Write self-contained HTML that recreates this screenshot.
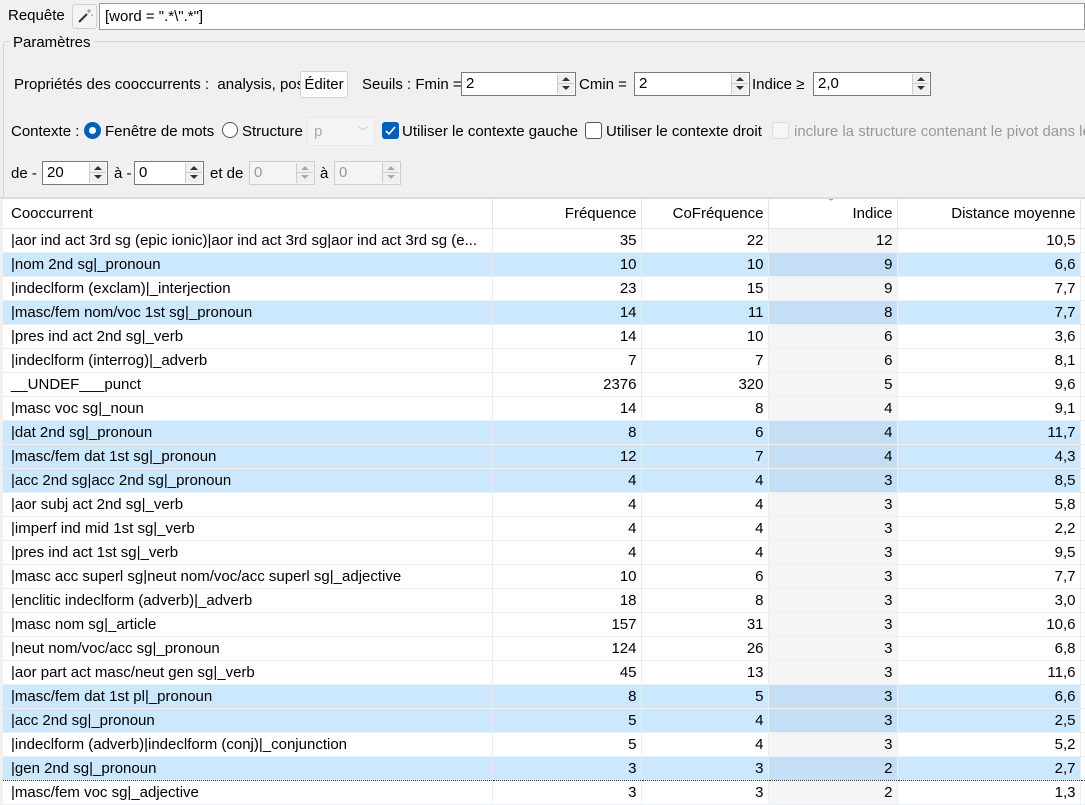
<!DOCTYPE html>
<html><head><meta charset="utf-8">
<style>
*{box-sizing:border-box;margin:0;padding:0}
body{width:1085px;height:805px;overflow:hidden;background:#f0f0f0;font-family:"Liberation Sans",sans-serif;font-size:15px;color:#000;position:relative}
.a{position:absolute;white-space:nowrap}
.box{position:absolute;background:#fff;border:1px solid #7a7a7a;height:24px;line-height:22px;padding-left:4px}
.spin{position:absolute;top:1px;right:1px;width:17px;height:20px;border-left:1px solid #ccc;background:#f0f0f0}
.spin:before{content:"";position:absolute;left:4px;top:3px;border:4px solid transparent;border-bottom:4px solid #333;border-top:0}
.spin:after{content:"";position:absolute;left:4px;top:12px;border:4px solid transparent;border-top:4px solid #333;border-bottom:0}
.spin i{position:absolute;left:0;right:0;top:9px;border-top:1px solid #ccc}
.dis{border-color:#ccc;color:#999;background:#f4f4f4}
.dis .spin:before{border-bottom-color:#aaa}.dis .spin:after{border-top-color:#aaa}
table{position:absolute;left:3px;top:199px;width:1082px;border-collapse:collapse;background:#fff;table-layout:fixed}
td,th{height:24px;padding:0 4px;border-right:1px solid #e9eef5;border-bottom:1px solid #eceff3;font-weight:normal;white-space:nowrap;overflow:hidden}
th{height:29px;text-align:right;border-right:1px solid #e5e5e5;border-bottom:1px solid #e5e5e5}
td{text-align:right}
td:first-child,th:first-child{text-align:left;padding-left:8px}
td:nth-child(4){background:#f5f5f5}
tr.s td{background:#cce8ff}
tr.s td:nth-child(4){background:#c4dff5}
tr.s td:nth-child(6),td:nth-child(6){background:#fff}
tr.f td{border-top:1px dotted #333;border-bottom:1px dotted #333}
</style></head><body>
<div class="a" style="left:8px;top:7px">Requête</div>
<div class="a" style="left:72px;top:4px;width:25px;height:25px;border:1px solid #d0d0d0;border-radius:3px;background:#f4f4f4">
<svg width="23" height="23" viewBox="0 0 23 23"><line x1="6" y1="17" x2="14" y2="9" stroke="#333" stroke-width="2"/><g stroke="#888" stroke-width="1"><line x1="16" y1="4" x2="16" y2="8"/><line x1="14" y1="6" x2="18" y2="6"/><line x1="19" y1="9" x2="19" y2="11"/></g></svg></div>
<div class="box" style="left:99px;top:3px;width:986px;height:27px;line-height:25px;padding-left:5px;border-color:#999">[word = ".*\".*"]</div>
<div class="a" style="left:3px;top:41px;width:1090px;height:158px;border:1px solid #d5d5d5;border-radius:3px"></div>
<div class="a" style="left:10px;top:34px;background:#f0f0f0;padding:0 3px">Paramètres</div>
<div class="a" style="left:14px;top:76px">Propriétés des cooccurrents :&nbsp; analysis, pos</div>
<div class="a" style="left:300px;top:71px;width:48px;height:27px;border:1px solid #d0d0d0;border-radius:3px;background:#fdfdfd;text-align:center;line-height:25px">Éditer</div>
<div class="a" style="left:362px;top:76px">Seuils : Fmin =</div>
<div class="box" style="left:461px;top:72px;width:115px">2<div class="spin"><i></i></div></div>
<div class="a" style="left:579px;top:76px">Cmin =</div>
<div class="box" style="left:634px;top:72px;width:116px">2<div class="spin"><i></i></div></div>
<div class="a" style="left:752px;top:76px">Indice ≥</div>
<div class="box" style="left:813px;top:72px;width:118px">2,0<div class="spin"><i></i></div></div>
<div class="a" style="left:11px;top:123px">Contexte :</div>
<div class="a" style="left:84px;top:122px;width:17px;height:17px;border-radius:50%;background:#005fb8"><div style="position:absolute;left:5px;top:5px;width:7px;height:7px;border-radius:50%;background:#fff"></div></div>
<div class="a" style="left:105px;top:123px">Fenêtre de mots</div>
<div class="a" style="left:222px;top:122px;width:16px;height:16px;border-radius:50%;border:1px solid #555;background:#fff"></div>
<div class="a" style="left:242px;top:123px">Structure</div>
<div class="a" style="left:307px;top:117px;width:68px;height:29px;background:#f4f4f4;border:1px solid #e8e8e8;color:#aaa;padding:5px 0 0 6px">p<span style="position:absolute;right:6px;top:5px;font-size:10px;color:#bbb">﹀</span></div>
<div class="a" style="left:382px;top:122px;width:17px;height:17px;border-radius:3px;background:#005fb8"><svg width="17" height="17"><path d="M4 9 L7 12 L13 5" stroke="#fff" stroke-width="1.6" fill="none"/></svg></div>
<div class="a" style="left:402px;top:123px">Utiliser le contexte gauche</div>
<div class="a" style="left:585px;top:122px;width:17px;height:17px;border-radius:3px;border:1px solid #555;background:#fff"></div>
<div class="a" style="left:606px;top:123px">Utiliser le contexte droit</div>
<div class="a" style="left:772px;top:122px;width:17px;height:17px;border-radius:3px;border:1px solid #ddd;background:#f6f6f6"></div>
<div class="a" style="left:794px;top:123px;color:#999">inclure la structure contenant le pivot dans le</div>
<div class="a" style="left:11px;top:165px">de -</div>
<div class="box" style="left:42px;top:161px;width:66px">20<div class="spin"><i></i></div></div>
<div class="a" style="left:114px;top:165px">à -</div>
<div class="box" style="left:134px;top:161px;width:70px">0<div class="spin"><i></i></div></div>
<div class="a" style="left:210px;top:165px">et de</div>
<div class="box dis" style="left:249px;top:161px;width:66px">0<div class="spin"><i></i></div></div>
<div class="a" style="left:320px;top:165px">à</div>
<div class="box dis" style="left:334px;top:161px;width:67px">0<div class="spin"><i></i></div></div>
<div class="a" style="left:0;top:197px;width:1085px;border-top:2px solid #dcdcdc"></div>
<table>
<colgroup><col style="width:489px"><col style="width:149px"><col style="width:127px"><col style="width:129px"><col style="width:183px"><col style="width:5px"></colgroup>
<tr><th>Cooccurrent</th><th>Fréquence</th><th>CoFréquence</th><th style="position:relative">Indice<span style="position:absolute;left:58px;top:-4px;font-size:9px;color:#666">﹀</span></th><th>Distance moyenne</th><th></th></tr>
<tr><td>|aor ind act 3rd sg (epic ionic)|aor ind act 3rd sg|aor ind act 3rd sg (e...</td><td>35</td><td>22</td><td>12</td><td>10,5</td><td></td></tr>
<tr class="s"><td>|nom 2nd sg|_pronoun</td><td>10</td><td>10</td><td>9</td><td>6,6</td><td></td></tr>
<tr><td>|indeclform (exclam)|_interjection</td><td>23</td><td>15</td><td>9</td><td>7,7</td><td></td></tr>
<tr class="s"><td>|masc/fem nom/voc 1st sg|_pronoun</td><td>14</td><td>11</td><td>8</td><td>7,7</td><td></td></tr>
<tr><td>|pres ind act 2nd sg|_verb</td><td>14</td><td>10</td><td>6</td><td>3,6</td><td></td></tr>
<tr><td>|indeclform (interrog)|_adverb</td><td>7</td><td>7</td><td>6</td><td>8,1</td><td></td></tr>
<tr><td>__UNDEF___punct</td><td>2376</td><td>320</td><td>5</td><td>9,6</td><td></td></tr>
<tr><td>|masc voc sg|_noun</td><td>14</td><td>8</td><td>4</td><td>9,1</td><td></td></tr>
<tr class="s"><td>|dat 2nd sg|_pronoun</td><td>8</td><td>6</td><td>4</td><td>11,7</td><td></td></tr>
<tr class="s"><td>|masc/fem dat 1st sg|_pronoun</td><td>12</td><td>7</td><td>4</td><td>4,3</td><td></td></tr>
<tr class="s"><td>|acc 2nd sg|acc 2nd sg|_pronoun</td><td>4</td><td>4</td><td>3</td><td>8,5</td><td></td></tr>
<tr><td>|aor subj act 2nd sg|_verb</td><td>4</td><td>4</td><td>3</td><td>5,8</td><td></td></tr>
<tr><td>|imperf ind mid 1st sg|_verb</td><td>4</td><td>4</td><td>3</td><td>2,2</td><td></td></tr>
<tr><td>|pres ind act 1st sg|_verb</td><td>4</td><td>4</td><td>3</td><td>9,5</td><td></td></tr>
<tr><td>|masc acc superl sg|neut nom/voc/acc superl sg|_adjective</td><td>10</td><td>6</td><td>3</td><td>7,7</td><td></td></tr>
<tr><td>|enclitic indeclform (adverb)|_adverb</td><td>18</td><td>8</td><td>3</td><td>3,0</td><td></td></tr>
<tr><td>|masc nom sg|_article</td><td>157</td><td>31</td><td>3</td><td>10,6</td><td></td></tr>
<tr><td>|neut nom/voc/acc sg|_pronoun</td><td>124</td><td>26</td><td>3</td><td>6,8</td><td></td></tr>
<tr><td>|aor part act masc/neut gen sg|_verb</td><td>45</td><td>13</td><td>3</td><td>11,6</td><td></td></tr>
<tr class="s"><td>|masc/fem dat 1st pl|_pronoun</td><td>8</td><td>5</td><td>3</td><td>6,6</td><td></td></tr>
<tr class="s"><td>|acc 2nd sg|_pronoun</td><td>5</td><td>4</td><td>3</td><td>2,5</td><td></td></tr>
<tr><td>|indeclform (adverb)|indeclform (conj)|_conjunction</td><td>5</td><td>4</td><td>3</td><td>5,2</td><td></td></tr>
<tr class="s f"><td>|gen 2nd sg|_pronoun</td><td>3</td><td>3</td><td>2</td><td>2,7</td><td></td></tr>
<tr><td>|masc/fem voc sg|_adjective</td><td>3</td><td>3</td><td>2</td><td>1,3</td><td></td></tr>
</table>
</body></html>
